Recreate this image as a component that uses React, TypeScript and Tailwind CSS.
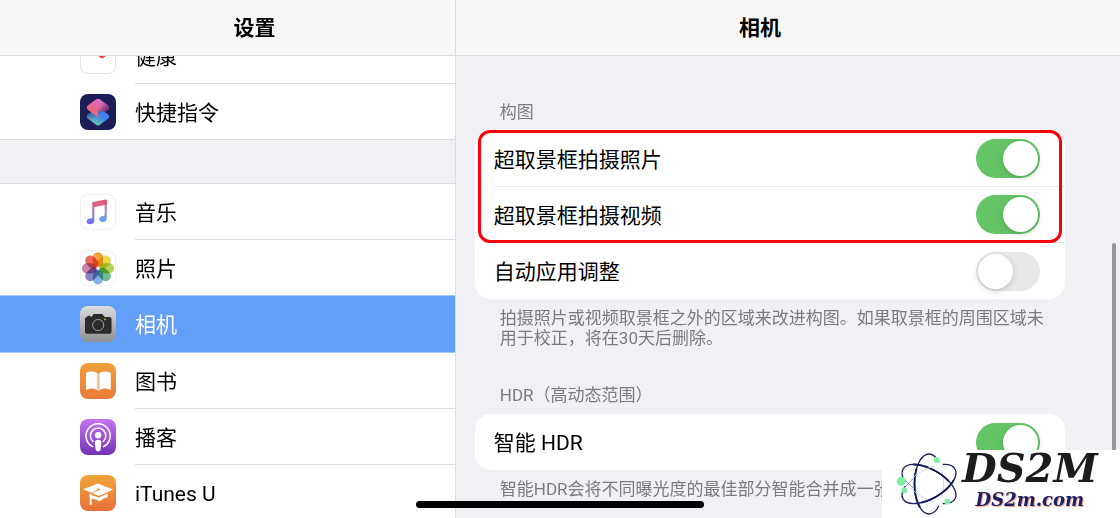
import { useId, useState, type ReactNode } from "react";

function IconTile({ className, children }: { className: string; children: ReactNode }) {
  return (
    <span className={`block size-9 shrink-0 overflow-hidden rounded-lg ${className}`}>
      <svg viewBox="0 0 36 36" className="block size-full" aria-hidden="true">
        {children}
      </svg>
    </span>
  );
}

const whiteTile = "bg-white ring-1 ring-inset ring-[#f0f0f2]";

function HealthIcon() {
  return (
    <IconTile className="bg-white ring-1 ring-inset ring-[#e4e4e6]">
      <path d="M22 20.600C18.500 18.500 15 15.500 15 11.500C15 7 20 6.500 22 9.500C24 6.500 29 7 29 11.500C29 15.500 25.500 18.500 22 20.600Z" fill="#ee3b3b" />
    </IconTile>
  );
}

function ShortcutsIcon() {
  return (
    <IconTile className="bg-[#1d1d56]">
      <defs>
        <linearGradient id="sc-low" x1="0.8" y1="0.2" x2="0.3" y2="1">
          <stop offset="0" stopColor="#3f7df0" />
          <stop offset="0.4" stopColor="#3f86e8" />
          <stop offset="1" stopColor="#6fd79a" />
        </linearGradient>
        <linearGradient id="sc-top" x1="0.1" y1="0.8" x2="0.7" y2="0.1">
          <stop offset="0" stopColor="#f0685a" />
          <stop offset="0.5" stopColor="#e5669a" />
          <stop offset="1" stopColor="#e067cf" />
        </linearGradient>
        <linearGradient id="sc-shade" x1="0.45" y1="0.4" x2="1" y2="0.75">
          <stop offset="0" stopColor="#1d1d56" stopOpacity="0" />
          <stop offset="1" stopColor="#1d1d56" stopOpacity="0.75" />
        </linearGradient>
        <linearGradient id="sc-shade2" x1="0.4" y1="0.6" x2="0" y2="0.2">
          <stop offset="0" stopColor="#1d1d56" stopOpacity="0" />
          <stop offset="1" stopColor="#1d1d56" stopOpacity="0.6" />
        </linearGradient>
      </defs>
      <path d="M16.300 14.300Q18 13.200 19.700 14.300L28.200 20.500Q30.200 22.500 28.200 24.600L19.700 31Q18 32.200 16.300 31L7.800 24.600Q5.800 22.500 7.800 20.500Z" fill="url(#sc-low)" />
      <path d="M16.300 14.300Q18 13.200 19.700 14.300L28.200 20.500Q30.200 22.500 28.200 24.600L19.700 31Q18 32.200 16.300 31L7.800 24.600Q5.800 22.500 7.800 20.500Z" fill="url(#sc-shade2)" />
      <path d="M16.300 5.200Q18 4.100 19.700 5.200L28.200 11.600Q30.200 13.600 28.200 15.700L24.500 18.300Q21 15.500 18.500 17.500Q17 19 19 22Q18 23.300 16.300 22L7.800 15.700Q5.800 13.600 7.800 11.600Z" fill="url(#sc-top)" />
      <path d="M16.300 5.200Q18 4.100 19.700 5.200L28.200 11.600Q30.200 13.600 28.200 15.700L24.500 18.300Q21 15.500 18.500 17.500L14 14Z" fill="url(#sc-shade)" />
    </IconTile>
  );
}

function MusicIcon() {
  return (
    <IconTile className={whiteTile}>
      <defs>
        <linearGradient id="mu" gradientUnits="userSpaceOnUse" x1="20" y1="5" x2="17" y2="31">
          <stop offset="0" stopColor="#e8566c" />
          <stop offset="0.35" stopColor="#cf6f9c" />
          <stop offset="0.75" stopColor="#6f8bf0" />
          <stop offset="1" stopColor="#7e5cf6" />
        </linearGradient>
        <linearGradient id="mu2" gradientUnits="userSpaceOnUse" x1="24" y1="8" x2="24" y2="28">
          <stop offset="0" stopColor="#e0506a" />
          <stop offset="0.45" stopColor="#a78cc8" />
          <stop offset="1" stopColor="#57a5ee" />
        </linearGradient>
      </defs>
      <path d="M12.200 9.200Q12.200 8.300 13 8.100L25.700 5.600Q26.800 5.500 26.800 6.500V10.500L14.300 13.200V26.500C14.300 29 12.800 30.300 10.300 30.300C8 30.300 6.600 29.300 6.600 27.600C6.600 25.800 8 24.900 9.700 24.600C11.300 24.300 12.200 24.300 12.200 23Z" fill="url(#mu)" />
      <path d="M24.700 8.500L26.800 6V23.800C26.800 26.500 25.300 28 22.900 28C20.700 28 19.300 27 19.300 25.200C19.300 23.500 20.600 22.600 22.300 22.300C24 22 24.700 21.800 24.700 20.500Z" fill="url(#mu2)" />
    </IconTile>
  );
}

const petals = ["#f2a23c", "#e9dc4a", "#b4d258", "#6fbf8d", "#7fb3e3", "#8b84c4", "#c583ad", "#ea6a5e"];

function PhotosIcon() {
  return (
    <IconTile className={whiteTile}>
      <g className="isolate">
        {petals.map((color, i) => (
          <rect
            key={color}
            x="12.900"
            y="2.200"
            width="10.200"
            height="14.600"
            rx="5.100"
            fill={color}
            transform={`rotate(${i * 45} 18 18.300)`}
            className="mix-blend-multiply"
          />
        ))}
      </g>
      <circle cx="18" cy="18.300" r="1.100" fill="#f4efe6" />
    </IconTile>
  );
}

function CameraIcon() {
  return (
    <IconTile className="bg-linear-to-b from-[#dddde1] to-[#8f8f93]">
      <path d="M7.300 11V10.300Q7.300 9.700 8 9.700H10Q10.700 9.700 10.700 10.300V11Q12 11 12.400 10L12.900 8.900Q13.300 8 14.400 8H21.700Q22.800 8 23.200 8.900L23.700 10Q24.100 11 25.400 11H29.500Q31.500 11 31.500 13V25.700Q31.500 27.700 29.500 27.700H7Q5 27.700 5 25.700V13Q5 11 7.300 11Z" fill="#2b2b2d" />
      <circle cx="18.200" cy="19" r="5.600" fill="#303032" stroke="#a5a5a8" strokeWidth="0.900" />
      <circle cx="18.200" cy="19" r="4" fill="#2a2a2c" />
      <circle cx="25" cy="13.400" r="0.900" fill="#e2ab35" />
    </IconTile>
  );
}

function BooksIcon() {
  return (
    <IconTile className="bg-linear-to-b from-[#f0a03c] to-[#e97a39]">
      <path d="M6 10.500Q6 9.900 6.600 9.500C10 7.900 14.500 7.900 17.500 10.300V27.500C14.500 25.100 10 25 6.600 26.700Q6 27 6 26.300Z" fill="#fff" />
      <path d="M30.800 10.500Q30.800 9.900 30.200 9.500C26.800 7.900 22.300 7.900 19.300 10.300V27.500C22.300 25.100 26.800 25 30.200 26.700Q30.800 27 30.800 26.300Z" fill="#fff" />
      <path d="M17.500 10.300H19.300V27.500L18.400 28.300L17.500 27.500Z" fill="#f6c39b" />
    </IconTile>
  );
}

function PodcastsIcon() {
  return (
    <IconTile className="bg-linear-to-b from-[#c673f2] to-[#7531b5]">
      <g fill="none" stroke="#fff" strokeWidth="1.500" strokeLinecap="round">
        <path d="M12.800 27.700A12.100 12.100 0 1 1 23.400 27.700" />
        <path d="M12.900 22.400A7.700 7.700 0 1 1 23.300 22.400" />
      </g>
      <circle cx="18.100" cy="16.300" r="3.200" fill="#fff" />
      <path d="M14.900 22.600Q15.200 20.700 18.100 20.700Q21 20.700 21.300 22.600Q21.300 26 20.500 30.400Q20.100 32.400 18.100 32.400Q16.100 32.400 15.700 30.400Q14.900 26 14.900 22.600Z" fill="#fff" />
    </IconTile>
  );
}

function ITunesUIcon() {
  return (
    <IconTile className="bg-linear-to-b from-[#f0a53b] to-[#e76f38]">
      <path d="M9.200 19.200L18 22.300Q18.700 22.500 19.400 22.200L28 18.300L27.500 22.500Q24 22.700 19.500 26.600Q16 23 11.500 24.300Q9 23.500 9.200 19.200Z" fill="#fff" />
      <path d="M3 14.300L18 8.500L33.200 14.600L18.900 20.900Z" fill="#fff" />
      <path d="M18.500 14.500L10.300 19.300V25" fill="none" stroke="#ee8b3a" strokeWidth="0.900" />
      <path d="M9.900 18.500L11.300 19V23.800L12 29.800H9.500L9.900 24Z" fill="#fff" />
      <ellipse cx="18.500" cy="14.400" rx="1.800" ry="0.900" fill="#ef983b" />
    </IconTile>
  );
}

interface NavItem {
  label: string;
  icon: ReactNode;
  active?: boolean;
}

function NavRow({ item, last }: { item: NavItem; last?: boolean }) {
  if (item.active) {
    return (
      <li>
        <a
          href="#camera"
          aria-current="page"
          className="relative -mt-px flex h-[58px] items-center gap-[19px] border-y border-[#a9c9fa] bg-[#629ff8] pl-20 text-[21px] text-white"
        >
          {item.icon}
          <span className="pt-1">{item.label}</span>
        </a>
      </li>
    );
  }
  return (
    <li>
      <a href="#item" className={`flex items-center gap-[19px] pl-20 text-[21px] text-black ${last ? "h-[55px]" : "h-14"}`}>
        {item.icon}
        <span className={`flex h-full flex-1 items-center pt-1 ${last ? "" : "border-b border-[#dedee0]"}`}>{item.label}</span>
      </a>
    </li>
  );
}

function NavGroup({ items, className }: { items: NavItem[]; className: string }) {
  return (
    <ul className={`bg-white ${className}`}>
      {items.map((item, i) => (
        <NavRow key={item.label} item={item} last={i === items.length - 1} />
      ))}
    </ul>
  );
}

const systemItems: NavItem[] = [
  { label: "健康", icon: <HealthIcon /> },
  { label: "快捷指令", icon: <ShortcutsIcon /> },
];

const mediaItems: NavItem[] = [
  { label: "音乐", icon: <MusicIcon /> },
  { label: "照片", icon: <PhotosIcon /> },
  { label: "相机", icon: <CameraIcon />, active: true },
  { label: "图书", icon: <BooksIcon /> },
  { label: "播客", icon: <PodcastsIcon /> },
  { label: "iTunes U", icon: <ITunesUIcon /> },
];

function ToggleRow({ label, initial, last }: { label: string; initial: boolean; last?: boolean }) {
  const id = useId();
  const [on, setOn] = useState(initial);
  return (
    <div className="pl-[19px]">
      <div className={`flex h-14 items-center justify-between pr-[25px] ${last ? "" : "border-b border-[#e4e4e6]"}`}>
        <label htmlFor={id} className="pt-1 text-[21px] text-black">
          {label}
        </label>
        <input
          id={id}
          type="checkbox"
          role="switch"
          checked={on}
          onChange={(e) => setOn(e.target.checked)}
          className="flex h-[39px] w-16 appearance-none items-center rounded-full bg-[#e8e8e8] px-0.5 before:size-[35px] before:rounded-full before:bg-white before:shadow-[0_2px_6px_rgba(0,0,0,0.18)] checked:justify-end checked:bg-[#65c466]"
        />
      </div>
    </div>
  );
}

function Orbit({ angle }: { angle: number }) {
  return (
    <g transform={`rotate(${angle})`} fill="none">
      <path d="M12.800 -14A14.500 30 0 0 1 12.800 14" stroke="#c9ccdc" strokeWidth="0.800" />
      <path d="M10 -21.700A14.500 30 0 1 0 10 21.700" stroke="#17205f" strokeWidth="1.300" />
      <path d="M-12.400 -15.500A14.500 30 0 0 0 -9 23.500" stroke="#141c5c" strokeWidth="1.900" />
    </g>
  );
}

function Watermark() {
  return (
    <div className="absolute right-0 bottom-0 flex h-[68px] w-[238px] items-start gap-0.5 bg-white pl-3.5">
      <svg viewBox="0 0 64 64" className="mt-0.5 size-16 shrink-0" aria-hidden="true">
        <g transform="translate(33 32)">
          <Orbit angle={0} />
          <Orbit angle={120} />
          <Orbit angle={240} />
        </g>
        <path d="M8 27L17 36M17 27L8 36" stroke="#5a6187" strokeWidth="0.600" />
        <g fill="#7cefa5">
          <circle cx="40.700" cy="8" r="2.900" />
          <circle cx="5.200" cy="29.300" r="4.500" />
          <circle cx="8.300" cy="38.300" r="2.900" />
          <circle cx="51.300" cy="49.700" r="2.900" />
        </g>
      </svg>
      <div className="flex flex-col items-center font-['DejaVu_Serif',serif] font-bold italic">
        <span className="text-[40px] leading-9 text-[#1c1c1c]">DS2M</span>
        <span className="text-[18px] leading-7 text-[#1b2164] [text-shadow:1px_1px_1px_#f0a080]">DS2m.com</span>
      </div>
    </div>
  );
}

const headerStyle =
  "flex h-14 shrink-0 items-center justify-center border-b border-[#dcdcde] bg-[#f7f7f7] pt-0.5 text-[21px] font-bold text-black";

const noteStyle = "text-[17px] leading-5 text-[#7b7b80]";

export default function App() {
  return (
    <div className="relative flex h-screen overflow-hidden bg-[#f0f0f5] font-[Roboto,'Noto_Sans_CJK_SC',sans-serif]" lang="zh-CN">
      <aside className="flex w-[40.7%] shrink-0 flex-col border-r border-[#dcdcde]">
        <header className={`${headerStyle} pl-[54px]`}>
          <h1>设置</h1>
        </header>
        <nav aria-label="设置" className="min-h-0 flex-1 overflow-hidden">
          <div className="-mt-7 flex flex-col gap-[43px]">
            <NavGroup items={systemItems} className="border-b border-[#dcdcde]" />
            <NavGroup items={mediaItems} className="border-t border-[#dcdcde]" />
          </div>
        </nav>
      </aside>

      <main className="flex min-w-0 flex-1 flex-col">
        <header className={`${headerStyle} pr-14`}>
          <h2>相机</h2>
        </header>
        <div className="min-h-0 flex-1 overflow-hidden pt-[46px] pr-[55px] pl-[19px]">
          <section>
            <h3 className={`px-[25px] ${noteStyle}`}>构图</h3>
            <div className="relative mt-[9px] rounded-2xl bg-white">
              <ToggleRow label="超取景框拍摄照片" initial />
              <ToggleRow label="超取景框拍摄视频" initial />
              <ToggleRow label="自动应用调整" initial={false} last />
              <div className="pointer-events-none absolute inset-x-[3px] -top-px h-[113px] rounded-xl border-3 border-[#fb0007]" />
            </div>
            <p className={`mt-[9px] pr-5 pl-[25px] ${noteStyle}`}>
              拍摄照片或视频取景框之外的区域来改进构图。如果取景框的周围区域未用于校正，将在30天后删除。
            </p>
          </section>
          <section className="mt-[37px]">
            <h3 className={`px-[25px] ${noteStyle}`}>HDR（高动态范围）</h3>
            <div className="mt-[9px] rounded-2xl bg-white">
              <ToggleRow label="智能 HDR" initial last />
            </div>
            <p className={`mt-[9px] pl-[25px] whitespace-nowrap ${noteStyle}`}>
              智能HDR会将不同曝光度的最佳部分智能合并成一张
            </p>
          </section>
        </div>
      </main>

      <div className="absolute top-[243px] right-1 bottom-0 w-1 rounded-t-full bg-[#98989b]" />
      <Watermark />
      <div className="absolute bottom-2.5 left-1/2 h-[7px] w-72 -translate-x-1/2 rounded-full bg-black" />
    </div>
  );
}
